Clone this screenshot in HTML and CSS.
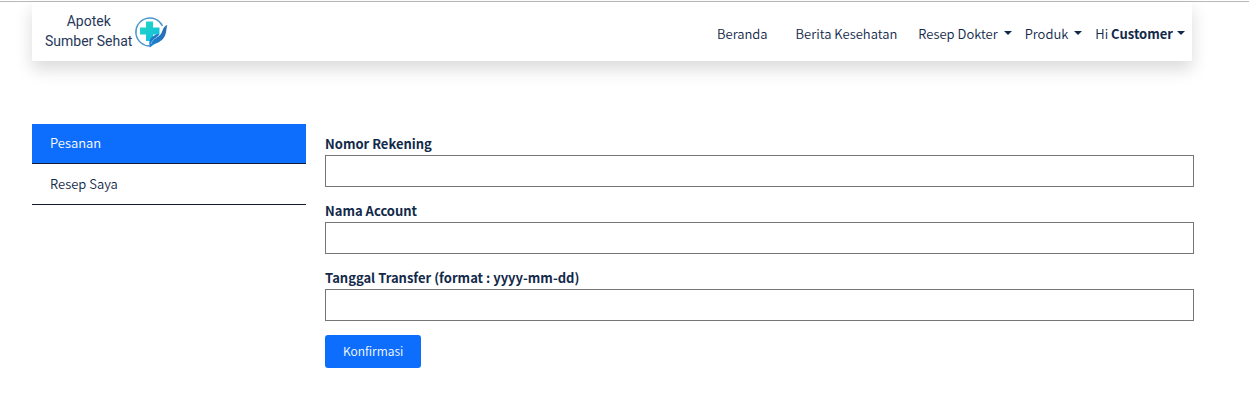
FILE: index.html
```html
<!DOCTYPE html>
<html lang="id">
<head>
<meta charset="utf-8">
<meta name="viewport" content="width=device-width, initial-scale=1">
<title>Apotek Sumber Sehat</title>
<link rel="stylesheet" href="styles.css">
</head>
<body>
<header class="navbar">
  <a class="brand" href="#">
    <span class="brand-name">Apotek<br>Sumber Sehat</span>
    <svg class="brand-logo" viewBox="0 0 34 34" aria-hidden="true">
      <defs>
        <linearGradient id="cross" x1="0" y1="0" x2="1" y2="1">
          <stop offset="0" stop-color="#1fdcc4"/>
          <stop offset="1" stop-color="#14b8e0"/>
        </linearGradient>
        <linearGradient id="hand" x1="1" y1="0" x2="0" y2="1">
          <stop offset="0" stop-color="#2f68b0"/>
          <stop offset="1" stop-color="#1583d2"/>
        </linearGradient>
      </defs>
      <path d="M28.500 11A14 14 0 1 0 16 31" fill="none" stroke="#4a98cc" stroke-width="1.400"/>
      <path d="M12 6.500h7v6h6.500v7H19V26h-7v-6.500H6v-7h6z" fill="url(#cross)"/>
      <path d="M16 32.500C14.500 27 15.500 23.500 19.500 21c2-1.500 4.500-2.500 5.300-1.800.8.700-.8 1.800-3 3.500 4-1.500 5.700-4 6.700-7.200.8-2.500 2.500-5 4.800-5.500-.7 2-.7 3.500-1 5.500-.7 6.500-4.200 10.500-9.300 12.500-2.500 1-4.700 2-7 4.500z" fill="url(#hand)"/>
      <path d="M17 29c1-3.500 3-5.500 6-6.500" fill="none" stroke="#8fd0f2" stroke-width=".7"/>
    </svg>
  </a>
  <nav class="menu">
    <a class="menu-link plain" href="#">Beranda</a>
    <a class="menu-link plain" href="#">Berita Kesehatan</a>
    <a class="menu-link" href="#">Resep Dokter <span class="caret"></span></a>
    <a class="menu-link" href="#">Produk <span class="caret"></span></a>
    <a class="menu-link user" href="#"><span>Hi <b>Customer</b></span><span class="caret"></span></a>
  </nav>
</header>
<main class="page">
  <nav class="sidebar">
    <a class="side-link active" href="#">Pesanan</a>
    <a class="side-link" href="#">Resep Saya</a>
  </nav>
  <form class="form">
    <div class="field">
      <label for="rekening">Nomor Rekening</label>
      <input id="rekening" type="text">
    </div>
    <div class="field">
      <label for="account">Nama Account</label>
      <input id="account" type="text">
    </div>
    <div class="field">
      <label for="tanggal">Tanggal Transfer (format : yyyy-mm-dd)</label>
      <input id="tanggal" type="text">
    </div>
    <button class="submit" type="button">Konfirmasi</button>
  </form>
</main>
</body>
</html>
```
FILE: styles.css
```css
* {
  box-sizing: border-box;
}

body {
  margin: 0;
  padding-top: 1px;
  background: #fff;
  color: #12294a;
  font-family: "Noto Sans CJK SC", "Noto Sans", sans-serif;
  font-size: 13px;
  font-weight: 350;
  line-height: 20px;
}

body::before {
  content: "";
  display: block;
  height: 1px;
  background: #b9b9b9;
}

a {
  color: inherit;
  text-decoration: none;
}

b {
  font-weight: 700;
}

.navbar {
  display: flex;
  align-items: center;
  justify-content: space-between;
  height: 59px;
  margin: 0 57px 0 32px;
  padding: 0 7px 0 13px;
  background: #fff;
  box-shadow: 0 8px 16px rgba(0, 0, 0, 0.15);
}

.brand {
  display: flex;
  align-items: center;
  gap: 2px;
}

.brand-name {
  padding-bottom: 2px;
  color: #27385a;
  font-family: Roboto, sans-serif;
  font-size: 14px;
  font-weight: 400;
  text-align: center;
}

.brand-logo {
  width: 34px;
  height: 34px;
}

.menu {
  display: flex;
  align-items: center;
  gap: 13px;
  padding-top: 5px;
}

.menu-link {
  display: flex;
  align-items: center;
  gap: 6px;
}

.menu-link.plain {
  padding-right: 8px;
}

.menu-link.plain:first-child {
  padding-right: 15px;
}

.menu-link.user {
  gap: 4px;
}

.caret {
  margin-bottom: 2px;
  border: 4px solid transparent;
  border-top-color: currentColor;
  border-bottom: 0;
}

.page {
  display: flex;
  align-items: flex-start;
  gap: 19px;
  margin: 63px 55px 0 32px;
}

.sidebar {
  flex: 0 0 274px;
}

.side-link {
  display: block;
  padding: 10px 18px;
  border-bottom: 1px solid #101c30;
}

.side-link.active {
  padding: 9px 18px 10px;
  background: #0d6efd;
  color: #fff;
}

.form {
  flex: 1;
  padding-top: 10px;
}

.field {
  margin-bottom: 14px;
}

.field label {
  display: block;
  margin-bottom: 1px;
  font-weight: 700;
}

.field input {
  display: block;
  width: 100%;
  height: 32px;
  padding: 4px 8px;
  border: 1px solid #767676;
  background: #fff;
  font: inherit;
}

.submit {
  display: block;
  padding: 6px 18px 7px;
  border: 0;
  border-radius: 3px;
  background: #0d6efd;
  color: #fff;
  font: inherit;
  font-size: 12px;
}
```
